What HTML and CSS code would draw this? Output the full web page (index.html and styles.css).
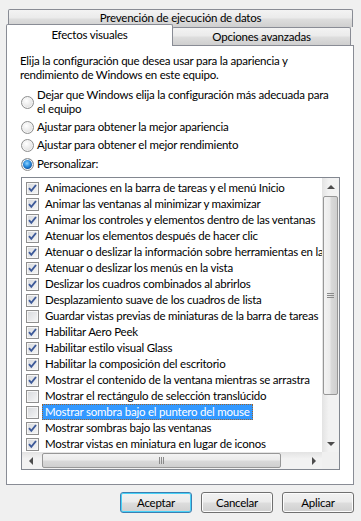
FILE: index.html
```html
<!DOCTYPE html>
<html lang="es">
<head>
    <meta charset="UTF-8">
    <meta name="viewport" content="width=device-width, initial-scale=1.0">
    <title>Opciones de rendimiento</title>
    <link rel="stylesheet" href="styles.css">
</head>
<body>
    <div class="dialog">
        <div class="tabs">
            <div class="tab tab-back">Prevención de ejecución de datos</div>
            <div class="tab-row">
                <div class="tab tab-active">Efectos visuales</div>
                <div class="tab tab-side">Opciones avanzadas</div>
            </div>
        </div>

        <div class="panel">
            <p class="intro">Elija la configuración que desea usar para la apariencia y rendimiento de Windows en este equipo.</p>

            <div class="options">
                <div class="radio-row"><span class="radio"></span><span>Dejar que Windows elija la configuración más adecuada para el equipo</span></div>
                <div class="radio-row"><span class="radio"></span><span>Ajustar para obtener la mejor apariencia</span></div>
                <div class="radio-row"><span class="radio"></span><span>Ajustar para obtener el mejor rendimiento</span></div>
                <div class="radio-row last"><span class="radio selected"></span><span>Personalizar:</span></div>
            </div>

            <div class="listbox">
                <div class="items" id="items"></div>

                <div class="vscroll">
                    <div class="sb-btn"><span class="arrow up"></span></div>
                    <div class="thumb thumb-v">
                        <svg width="7" height="5" viewBox="0 0 7 5"><path d="M0 0.5h7M0 2.5h7M0 4.5h7" stroke="#8a8a8a" stroke-width="1"/></svg>
                    </div>
                    <div class="sb-fill"></div>
                    <div class="sb-btn"><span class="arrow down"></span></div>
                </div>

                <div class="hscroll">
                    <div class="sb-btn"><span class="arrow left"></span></div>
                    <div class="thumb thumb-h">
                        <svg width="5" height="7" viewBox="0 0 5 7"><path d="M0.5 0v7M2.5 0v7M4.5 0v7" stroke="#8a8a8a" stroke-width="1"/></svg>
                    </div>
                    <div class="sb-fill"></div>
                    <div class="sb-btn"><span class="arrow right"></span></div>
                </div>

                <div class="corner"></div>
            </div>
        </div>

        <div class="buttons">
            <button class="btn default">Aceptar</button>
            <button class="btn">Cancelar</button>
            <button class="btn">Aplicar</button>
        </div>
    </div>

    <script>
        const effects = [
            ['Animaciones en la barra de tareas y el menú Inicio', true],
            ['Animar las ventanas al minimizar y maximizar', true],
            ['Animar los controles y elementos dentro de las ventanas', true],
            ['Atenuar los elementos después de hacer clic', true],
            ['Atenuar o deslizar la información sobre herramientas en la vista', true],
            ['Atenuar o deslizar los menús en la vista', true],
            ['Deslizar los cuadros combinados al abrirlos', true],
            ['Desplazamiento suave de los cuadros de lista', true],
            ['Guardar vistas previas de miniaturas de la barra de tareas', false],
            ['Habilitar Aero Peek', true],
            ['Habilitar estilo visual Glass', true],
            ['Habilitar la composición del escritorio', true],
            ['Mostrar el contenido de la ventana mientras se arrastra', true],
            ['Mostrar el rectángulo de selección translúcido', false],
            ['Mostrar sombra bajo el puntero del mouse', false],
            ['Mostrar sombras bajo las ventanas', true],
            ['Mostrar vistas en miniatura en lugar de iconos', true]
        ];
        const selectedIndex = 14;

        const list = document.getElementById('items');
        effects.forEach(([text, on], i) => {
            const row = document.createElement('div');
            row.className = 'item';

            const box = document.createElement('span');
            box.className = on ? 'check on' : 'check';
            if (on) {
                box.innerHTML = '<svg width="11" height="11" viewBox="0 0 11 11"><path d="M2 5.2 L4.3 7.8 L9 2" fill="none" stroke="#3d5a99" stroke-width="1.9"/></svg>';
            }

            const label = document.createElement('span');
            label.className = i === selectedIndex ? 'label selected' : 'label';
            label.textContent = text;

            row.appendChild(box);
            row.appendChild(label);
            list.appendChild(row);
        });
    </script>
</body>
</html>
```

FILE: styles.css
```css
body {
    margin: 0;
    background: #f0f0f0;
    font-family: "Segoe UI", Lato, "Noto Sans", sans-serif;
    font-size: 11.5px;
    letter-spacing: -0.22px;
    color: #000000;
}

.dialog {
    width: 348px;
    padding: 9px 7px 0 6px;
}

/* tabs */

.tab {
    box-sizing: border-box;
    border: 1px solid #898c95;
    border-bottom: none;
    background: linear-gradient(#f3f3f3 0%, #ebebeb 45%, #dddddd 55%, #cfcfcf 100%);
    text-align: center;
    line-height: 14px;
    border-radius: 2px 2px 0 0;
}

.tab-back {
    height: 18px;
    margin: 0 1px 0 2px;
    padding-top: 1px;
}

.tab-row {
    display: flex;
    align-items: flex-end;
    margin-top: -3px;
}

.tab-active {
    position: relative;
    z-index: 1;
    width: 167px;
    height: 22px;
    margin-bottom: -1px;
    padding-top: 3px;
    background: #ffffff;
}

.tab-side {
    width: 179px;
    height: 18px;
    margin-left: -1px;
    padding-top: 2px;
}

/* panel */

.panel {
    box-sizing: border-box;
    height: 440px;
    border: 1px solid #898c95;
    background: #ffffff;
    padding: 0 13px 0 14px;
}

.intro {
    margin: 8px 0 0 -1px;
    line-height: 14px;
}

.options {
    display: flex;
    flex-direction: column;
    gap: 4px;
    margin-top: 6px;
}

.radio-row {
    display: flex;
    align-items: center;
    gap: 3px;
    line-height: 14px;
    padding-right: 10px;
}

.radio-row.last {
    margin-top: 1px;
}

.radio {
    flex: none;
    box-sizing: border-box;
    width: 13px;
    height: 13px;
    border-radius: 50%;
    border: 1px solid #8e8f8f;
    background: radial-gradient(circle at 40% 35%, #ffffff 0%, #e8e8e8 55%, #c9c9c9 100%);
    box-shadow: inset 0 0 0 1px #f4f4f4;
}

.radio.selected {
    background: radial-gradient(circle at 45% 40%, #8fd3ff 0%, #2b8fe0 35%, #0c4f9c 65%, #e6e6e6 70%, #cfcfcf 100%);
}

/* list with checkboxes */

.listbox {
    box-sizing: border-box;
    width: 319px;
    height: 293px;
    margin-top: 6px;
    border: 1px solid #828790;
    background: #ffffff;
    display: grid;
    grid-template-columns: 1fr 17px;
    grid-template-rows: 1fr 17px;
}

.items {
    overflow: hidden;
    padding: 2px 0 0 4px;
    white-space: nowrap;
}

.item {
    display: flex;
    align-items: center;
    height: 16px;
}

.check {
    flex: none;
    box-sizing: border-box;
    width: 13px;
    height: 13px;
    border: 1px solid #8f8f8f;
    background: linear-gradient(135deg, #d6d8dc 0%, #f7f7f7 100%);
    box-shadow: inset 0 0 0 1px #f6f6f6;
}

.check svg {
    display: block;
}

.label {
    margin-left: 3px;
    padding: 0 2px;
    line-height: 14px;
    border: 1px solid transparent;
}

.label.selected {
    background: #3399ff;
    color: #ffffff;
    border: 1px dotted #a0642a;
}

/* scrollbars */

.vscroll {
    display: flex;
    flex-direction: column;
    background: linear-gradient(90deg, #e3e3e3, #f2f2f2 40%, #f2f2f2);
}

.hscroll {
    display: flex;
    background: linear-gradient(#e3e3e3, #f2f2f2 40%, #f2f2f2);
}

.corner {
    background: #f0f0f0;
}

.sb-btn {
    flex: none;
    width: 17px;
    height: 17px;
    display: flex;
    align-items: center;
    justify-content: center;
}

.sb-fill {
    flex: 1;
}

.arrow {
    width: 0;
    height: 0;
    border: 4px solid transparent;
}

.arrow.up {
    border-bottom-color: #4d4d4d;
    border-top-width: 0;
}

.arrow.down {
    border-top-color: #4d4d4d;
    border-bottom-width: 0;
}

.arrow.left {
    border-right-color: #4d4d4d;
    border-left-width: 0;
}

.arrow.right {
    border-left-color: #4d4d4d;
    border-right-width: 0;
}

.thumb {
    box-sizing: border-box;
    border: 1px solid #979797;
    border-radius: 2px;
    display: flex;
    align-items: center;
    justify-content: center;
}

.thumb-v {
    height: 199px;
    margin: 1px 1px 0;
    background: linear-gradient(90deg, #f3f3f3 0%, #ebebeb 45%, #d9d9d9 55%, #cfcfcf 100%);
}

.thumb-h {
    width: 239px;
    margin: 1px 0 1px 3px;
    background: linear-gradient(#f3f3f3 0%, #ebebeb 45%, #d9d9d9 55%, #cfcfcf 100%);
}

/* buttons */

.buttons {
    display: flex;
    justify-content: flex-end;
    gap: 9px;
    margin-top: 7px;
}

.btn {
    box-sizing: border-box;
    width: 72px;
    height: 21px;
    padding: 0;
    border: 1px solid #707070;
    border-radius: 3px;
    background: linear-gradient(#f2f2f2 0%, #ebebeb 48%, #dddddd 52%, #cfcfcf 100%);
    box-shadow: inset 0 0 0 1px #fcfcfc;
    font-family: inherit;
    font-size: 11.5px;
    letter-spacing: inherit;
    color: #000000;
}

.btn.default {
    border-color: #3c7fb1;
    box-shadow: inset 0 0 0 1px #48d2f8;
}
```
